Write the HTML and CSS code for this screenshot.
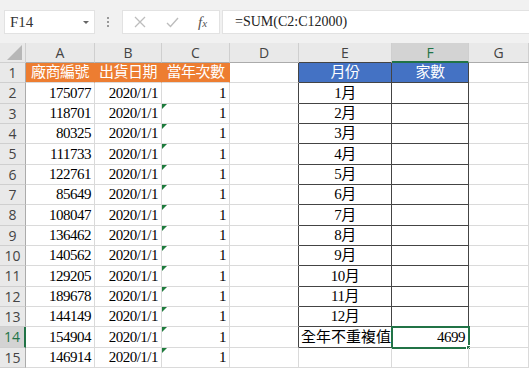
FILE: index.html
```html
<!DOCTYPE html>
<html lang="zh-Hant">
<head>
    <meta charset="UTF-8">
    <title>Excel - 家數統計</title>
    <link rel="stylesheet" href="styles.css">
</head>
<body>
    <div class="toolbar">
        <div class="namebox">F14<span class="arrow"></span></div>
        <div class="dots"><span></span><span></span><span></span></div>
        <div class="fxbox">
            <svg class="ico" width="12" height="12" viewBox="0 0 12 12"><path d="M1 1L11 11M11 1L1 11" stroke="#bdbdbd" stroke-width="1.3" fill="none"/></svg>
            <svg class="ico" width="13" height="11" viewBox="0 0 13 11"><path d="M1 6L4.5 9.5L12 1" stroke="#bdbdbd" stroke-width="1.4" fill="none"/></svg>
            <span class="fx">f<i>x</i></span>
        </div>
        <div class="formula">=SUM(C2:C12000)</div>
    </div>

    <div class="sheet">
        <div class="corner"><span></span></div>
        <div class="h">A</div><div class="h">B</div><div class="h">C</div><div class="h">D</div><div class="h top">E</div><div class="h top sel">F</div><div class="h">G</div>

        <div class="rh">1</div><div class="c t or">廠商編號</div><div class="c t or">出貨日期</div><div class="c t or">當年次數</div><div class="c bl"></div><div class="c t bx blue">月份</div><div class="c t bx blue">家數</div><div class="c"></div>
        <div class="rh">2</div><div class="c">175077</div><div class="c">2020/1/1</div><div class="c">1</div><div class="c bl"></div><div class="c t bx">1月</div><div class="c bx"></div><div class="c"></div>
        <div class="rh">3</div><div class="c">118701</div><div class="c">2020/1/1</div><div class="c tri">1</div><div class="c bl"></div><div class="c t bx">2月</div><div class="c bx"></div><div class="c"></div>
        <div class="rh">4</div><div class="c">80325</div><div class="c">2020/1/1</div><div class="c tri">1</div><div class="c bl"></div><div class="c t bx">3月</div><div class="c bx"></div><div class="c"></div>
        <div class="rh">5</div><div class="c">111733</div><div class="c">2020/1/1</div><div class="c tri">1</div><div class="c bl"></div><div class="c t bx">4月</div><div class="c bx"></div><div class="c"></div>
        <div class="rh">6</div><div class="c">122761</div><div class="c">2020/1/1</div><div class="c tri">1</div><div class="c bl"></div><div class="c t bx">5月</div><div class="c bx"></div><div class="c"></div>
        <div class="rh">7</div><div class="c">85649</div><div class="c">2020/1/1</div><div class="c tri">1</div><div class="c bl"></div><div class="c t bx">6月</div><div class="c bx"></div><div class="c"></div>
        <div class="rh">8</div><div class="c">108047</div><div class="c">2020/1/1</div><div class="c tri">1</div><div class="c bl"></div><div class="c t bx">7月</div><div class="c bx"></div><div class="c"></div>
        <div class="rh">9</div><div class="c">136462</div><div class="c">2020/1/1</div><div class="c tri">1</div><div class="c bl"></div><div class="c t bx">8月</div><div class="c bx"></div><div class="c"></div>
        <div class="rh">10</div><div class="c">140562</div><div class="c">2020/1/1</div><div class="c tri">1</div><div class="c bl"></div><div class="c t bx">9月</div><div class="c bx"></div><div class="c"></div>
        <div class="rh">11</div><div class="c">129205</div><div class="c">2020/1/1</div><div class="c tri">1</div><div class="c bl"></div><div class="c t bx">10月</div><div class="c bx"></div><div class="c"></div>
        <div class="rh">12</div><div class="c">189678</div><div class="c">2020/1/1</div><div class="c tri">1</div><div class="c bl"></div><div class="c t bx">11月</div><div class="c bx"></div><div class="c"></div>
        <div class="rh">13</div><div class="c">144149</div><div class="c">2020/1/1</div><div class="c tri">1</div><div class="c bl"></div><div class="c t bx">12月</div><div class="c bx"></div><div class="c"></div>
        <div class="rh sel">14</div><div class="c">154904</div><div class="c">2020/1/1</div><div class="c tri">1</div><div class="c bl"></div><div class="c l bx">全年不重複值</div><div class="c bx active">4699</div><div class="c"></div>
        <div class="rh">15</div><div class="c">146914</div><div class="c">2020/1/1</div><div class="c tri">1</div><div class="c"></div><div class="c"></div><div class="c"></div><div class="c"></div>
    </div>
</body>
</html>
```

FILE: styles.css
```css
body {
    margin: 0;
    width: 529px;
    height: 370px;
    overflow: hidden;
    background-color: #fff;
    font-family: "Liberation Serif", "Noto Sans CJK TC", serif;
    color: #000;
}
.toolbar {
    display: flex;
    align-items: center;
    height: 43px;
    padding: 10px 0 9px 4px;
    box-sizing: border-box;
    background-color: #f1f1f1;
}
.namebox {
    position: relative;
    width: 91px;
    height: 24px;
    box-sizing: border-box;
    background-color: #fff;
    border: 1px solid #e2e2e2;
    padding-left: 5px;
    font-size: 15px;
    line-height: 22px;
    color: #333;
}
.arrow {
    position: absolute;
    right: 5px;
    top: 10px;
    border-left: 3px solid transparent;
    border-right: 3px solid transparent;
    border-top: 3px solid #666;
}
.dots {
    display: flex;
    flex-direction: column;
    gap: 2px;
    margin: 0 13px 0 12px;
}
.dots span {
    width: 2px;
    height: 2px;
    background-color: #999;
}
.fxbox {
    display: flex;
    align-items: center;
    width: 98px;
    height: 24px;
    box-sizing: border-box;
    background-color: #fff;
    border: 1px solid #e2e2e2;
    padding-left: 11px;
    gap: 20px;
}
.fx {
    font-style: italic;
    font-size: 15px;
    color: #555;
    margin-left: -1px;
}
.fx i {
    font-size: 11px;
}
.formula {
    flex: 1;
    height: 24px;
    margin-left: 2px;
    box-sizing: border-box;
    background-color: #fff;
    border: 1px solid #e2e2e2;
    border-right: none;
    padding-left: 12px;
    font-size: 14px;
    line-height: 22px;
    color: #222;
}
.sheet {
    display: grid;
    grid-template-columns: 26px 69px 67px 68px 69px 93px 77px 60px;
    grid-template-rows: 20px repeat(15, 20.33px);
    font-size: 15px;
    letter-spacing: -0.5px;
}
.corner, .h, .rh {
    background-color: #e9e9e9;
    box-sizing: border-box;
    border-right: 1px solid #cfcfcf;
    border-bottom: 1px solid #cfcfcf;
    font-family: "Open Sans", "Noto Sans", sans-serif;
    font-size: 14px;
    letter-spacing: 0;
    color: #444;
}
.corner {
    position: relative;
}
.corner span {
    position: absolute;
    right: 3px;
    bottom: 2px;
    border-left: 15px solid transparent;
    border-bottom: 15px solid #b7b7b7;
}
.h {
    display: flex;
    justify-content: center;
    align-items: center;
    border-bottom-color: #ababab;
}
.h.top {
    border-bottom-color: #444;
}
.h.sel {
    background-color: #d3d3d3;
    color: #217346;
    border-bottom: 2px solid #217346;
}
.rh {
    display: flex;
    justify-content: center;
    align-items: center;
    border-right-color: #ababab;
}
.rh.sel {
    background-color: #d3d3d3;
    color: #217346;
    border-right: 2px solid #217346;
}
.c {
    position: relative;
    display: flex;
    justify-content: flex-end;
    align-items: flex-end;
    box-sizing: border-box;
    padding: 0 3px 1px 0;
    border-right: 1px solid #dadada;
    border-bottom: 1px solid #dadada;
    white-space: nowrap;
    line-height: 17px;
}
.c.t {
    justify-content: center;
    padding-right: 0;
}
.c.l {
    justify-content: flex-start;
    padding: 0 0 1px 2px;
    letter-spacing: 0;
}
.or {
    background-color: #ed7d31;
    color: #fff;
    border-right-color: #ed7d31;
}
.blue {
    background-color: #4472c4;
    color: #fff;
}
.bx {
    border-right-color: #444;
    border-bottom-color: #444;
}
.bl {
    border-right-color: #444;
}
.tri::before {
    content: "";
    position: absolute;
    left: 0;
    top: 0;
    border-top: 5px solid #1e7b3c;
    border-right: 5px solid transparent;
}
.active {
    outline: 2px solid #217346;
    outline-offset: -1px;
}
.active::after {
    content: "";
    position: absolute;
    right: -3px;
    bottom: -3px;
    width: 5px;
    height: 5px;
    background-color: #217346;
    border: 1px solid #fff;
    box-sizing: border-box;
}
```
